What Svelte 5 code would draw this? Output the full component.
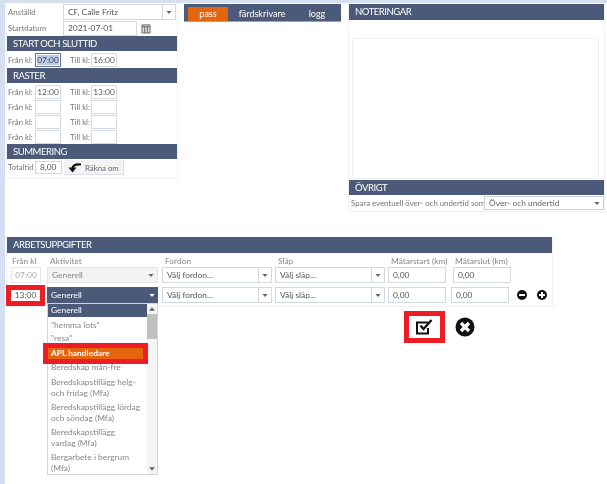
<script>
  // tidrader i raster-blocket
  const breaks = [
    { from: '12:00', to: '13:00' },
    { from: '', to: '' },
    { from: '', to: '' },
    { from: '', to: '' }
  ]

  const activities = [
    { name: 'Generell', cls: 'selected' },
    { name: '"hemma lots"' },
    { name: '"resa"' },
    { name: 'APL handledare', cls: 'marked' },
    { name: 'Beredskap mån-fre' },
    { name: 'Beredskapstillägg helg- och fridag (Mfa)' },
    { name: 'Beredskapstillägg lördag och söndag (Mfa)' },
    { name: 'Beredskapstillägg\nvardag (Mfa)' },
    { name: 'Bergarbete i bergrum (Mfa)' }
  ]
</script>

{#snippet arrow()}
  <svg class="arrow" viewBox="0 0 7 4" width="6" height="3"><path d="M0 0h7L3.5 4z" /></svg>
{/snippet}

{#snippet combo(text, cls = '')}
  <div class="combo {cls}">
    <span class="combo-text">{text}</span>
    <span class="combo-btn">{@render arrow()}</span>
  </div>
{/snippet}

<div class="page">
  <div class="top">
    <section class="left panel">
      <div class="field-row first">
        <span class="lbl wide">Anställd</span>
        {@render combo('CF, Calle Fritz', 'employee')}
      </div>
      <div class="field-row date">
        <span class="lbl wide">Startdatum</span>
        <div class="input date-input">2021-07-01</div>
        <svg class="cal" viewBox="0 0 11 11" width="10" height="11">
          <path d="M1 1.5h9v9H1z" fill="#d8d8d8" stroke="#666" stroke-width="1" />
          <path d="M1 3.5h9M4 3.5v7M7 3.5v7" stroke="#666" stroke-width="1" fill="none" />
        </svg>
      </div>

      <h2>START OCH SLUTTID</h2>
      <div class="time-row one">
        <span class="lbl">Från kl:</span>
        <div class="input time active"><span class="sel">07:00</span></div>
        <span class="lbl till">Till kl:</span>
        <div class="input time">16:00</div>
      </div>

      <h2>RASTER</h2>
      <div class="breaks">
        {#each breaks as b}
          <div class="time-row">
            <span class="lbl">Från kl:</span>
            <div class="input time">{b.from}</div>
            <span class="lbl till">Till kl:</span>
            <div class="input time">{b.to}</div>
          </div>
        {/each}
      </div>

      <h2>SUMMERING</h2>
      <div class="sum-row">
        <span class="lbl">Totaltid</span>
        <div class="input total">8,00</div>
        <button class="recalc">
          <svg viewBox="0 0 14 10" width="14" height="10">
            <path d="M13 1.5C8 1 5 2 4.5 5.5" fill="none" stroke="#111" stroke-width="2.2" />
            <path d="M0.5 4.5h8L4.5 9.5z" fill="#111" />
          </svg>
          <span>Räkna om</span>
        </button>
      </div>
    </section>

    <nav class="tabs">
      <span class="tab on">pass</span>
      <span class="tab">färdskrivare</span>
      <span class="tab">logg</span>
    </nav>

    <section class="right panel">
      <h2 class="notes-head">NOTERINGAR</h2>
      <div class="notes"></div>
      <h2>ÖVRIGT</h2>
      <div class="other-row">
        <span class="lbl">Spara eventuell över- och undertid som</span>
        <div class="other-select">
          <span>Över- och undertid</span>
          {@render arrow()}
        </div>
      </div>
    </section>
  </div>

  <section class="tasks panel">
    <h2 class="tasks-head">ARBETSUPPGIFTER</h2>
    <div class="grid">
      <span class="cap center">Från kl</span>
      <span class="cap">Aktivitet</span>
      <span class="cap">Fordon</span>
      <span class="cap">Släp</span>
      <span class="cap">Mätarstart (km)</span>
      <span class="cap">Mätarslut (km)</span>
      <span></span>

      <div class="input from muted">07:00</div>
      <div class="activity-plain"><span>Generell</span>{@render arrow()}</div>
      {@render combo('Välj fordon...')}
      {@render combo('Välj släp...')}
      <div class="input km">0,00</div>
      <div class="input km nudge">0,00</div>
      <span></span>

      <div class="from-hl"><div class="from-val">13:00</div></div>
      <div class="activity-open">
        <div class="activity-cur"><span>Generell</span>{@render arrow()}</div>
        <div class="dropdown">
          <ul>
            {#each activities as a}
              <li class={a.cls}>{a.name}</li>
            {/each}
          </ul>
          <div class="scrollbar">
            <svg viewBox="0 0 7 4" width="6" height="4"><path d="M0 4h7L3.5 0z" /></svg>
            <div class="thumb"></div>
            <svg class="down" viewBox="0 0 7 4" width="6" height="4"><path d="M0 0h7L3.5 4z" /></svg>
          </div>
        </div>
      </div>
      {@render combo('Välj fordon...')}
      {@render combo('Välj släp...')}
      <div class="input km">0,00</div>
      <div class="input km shift">0,00</div>
      <div class="row-btns">
        <svg viewBox="0 0 10 10" width="10" height="10"><circle cx="5" cy="5" r="5" fill="#111" /><path d="M2 5h6" stroke="#fff" stroke-width="2" /></svg>
        <svg viewBox="0 0 10 10" width="10" height="10"><circle cx="5" cy="5" r="5" fill="#111" /><path d="M2 5h6M5 2v6" stroke="#fff" stroke-width="2" /></svg>
      </div>
    </div>
    <div class="actions">
      <div class="save-hl">
        <svg viewBox="0 0 20 16" width="20" height="16">
          <path d="M13 3.5H2v11h11V9" fill="none" stroke="#111" stroke-width="2" />
          <path d="M5.5 6.5l3 3.5 8-9" fill="none" stroke="#111" stroke-width="2.4" />
        </svg>
      </div>
      <svg class="cancel" viewBox="0 0 20 20" width="20" height="20">
        <circle cx="10" cy="10" r="9.5" fill="#111" />
        <path d="M6 6l8 8M14 6l-8 8" stroke="#fff" stroke-width="3.4" />
      </svg>
    </div>
  </section>
</div>

<style>
  :global(body) {
    font-family: Lato, 'Liberation Sans', sans-serif;
    background: #fff;
    color: #444;
  }

  * {
    box-sizing: border-box;
  }

  .page {
    width: 607px;
    height: 484px;
    overflow: hidden;
    background: linear-gradient(#d5dfef, #d5dfef) left top / 5px 100% no-repeat,
      linear-gradient(#d5dfef, #d5dfef) left top / 100% 3px no-repeat, #fff;
    padding: 4px 0 0 6px;
    filter: blur(0.35px);
  }

  .top {
    display: flex;
    align-items: flex-start;
  }

  .panel {
    border: 1px solid #f0f0f0;
  }

  h2 {
    margin: 0;
    height: 15px;
    background: #4a5a78;
    color: #fff;
    font-size: 9.5px;
    font-weight: 400;
    letter-spacing: -0.45px;
    line-height: 15px;
    padding-left: 6px;
    white-space: nowrap;
  }

  .lbl {
    font-size: 7.8px;
    color: #777;
    white-space: nowrap;
  }

  .input {
    border: 1px solid #d3d9e2;
    background: #fff;
    font-size: 8.4px;
    color: #555;
    white-space: nowrap;
  }

  /* vänster panel */
  .left {
    width: 172px;
    height: 175px;
    border-top: 0;
    flex: none;
  }

  .field-row {
    display: flex;
    align-items: center;
    height: 16px;
  }

  .lbl.wide {
    width: 56px;
    padding-left: 1px;
  }

  .combo {
    display: flex;
    height: 16px;
    border: 1px solid #d3d9e2;
    background: #fff;
    font-size: 8.4px;
    color: #555;
    align-items: stretch;
  }

  .combo-text {
    flex: 1;
    padding-left: 4px;
    line-height: 14px;
    white-space: nowrap;
  }

  .combo-btn {
    width: 13px;
    border-left: 1px solid #d3d9e2;
    display: flex;
    align-items: center;
    justify-content: center;
  }

  .arrow {
    fill: #666;
  }

  .employee {
    width: 113px;
    height: 16px;
  }

  .date-input {
    width: 74px;
    height: 15px;
    line-height: 13px;
    padding-left: 4px;
  }

  .cal {
    margin-left: 4px;
  }

  .time-row {
    display: flex;
    align-items: center;
    height: 15px;
    padding-left: 1px;
  }

  .time-row.one {
    height: 17px;
    padding-top: 1px;
  }

  .time-row .lbl {
    width: 27px;
    flex: none;
  }

  .time-row .lbl.till {
    width: 30px;
    padding-left: 9px;
  }

  .time {
    width: 26px;
    height: 14px;
    text-align: center;
    line-height: 12px;
  }

  .time.active {
    border-color: #66708a;
  }

  .sel {
    background: #b9cbe6;
    color: #445;
  }

  .breaks {
    padding-top: 1px;
  }

  .sum-row {
    display: flex;
    align-items: center;
    height: 16px;
    padding-left: 1px;
  }

  .sum-row .lbl {
    width: 27px;
  }

  .total {
    width: 27px;
    height: 13px;
    line-height: 11px;
    padding-left: 4px;
  }

  .recalc {
    margin-left: 2px;
    width: 60px;
    height: 15px;
    border: 0;
    border-right: 1px solid #dcdfe5;
    border-bottom: 1px solid #dcdfe5;
    background: #f2f3f5;
    display: flex;
    align-items: center;
    gap: 3px;
    padding: 2px 0 0 4px;
    font: 7.8px Lato, 'Liberation Sans', sans-serif;
    color: #666;
    white-space: nowrap;
  }

  /* flikar */
  .tabs {
    margin: 0 0 0 6px;
    width: 157px;
    height: 18px;
    flex: none;
    background: #4a5a78;
    border-bottom: 1px solid #9aa6ba;
    display: flex;
    align-items: flex-end;
    padding-left: 4px;
    color: #fff;
    font-size: 9px;
  }

  .tab {
    height: 14px;
    line-height: 14px;
    text-align: center;
    white-space: nowrap;
  }

  .tab:nth-child(1) {
    width: 40px;
  }

  .tab:nth-child(2) {
    width: 66px;
    margin-left: 1px;
  }

  .tab:nth-child(3) {
    width: 40px;
    margin-left: 2px;
  }

  .tab.on {
    background: #e5650f;
  }

  /* höger panel */
  .right {
    width: 257px;
    height: 208px;
    margin-left: 7px;
    border-top: 0;
    flex: none;
  }

  .notes-head {
    height: 16px;
    line-height: 16px;
  }

  .notes {
    margin: 18px 5px 1px 3px;
    height: 141px;
    border: 1px solid #eceef2;
  }

  .other-row {
    display: flex;
    align-items: center;
    height: 14px;
    padding-left: 2px;
    margin-top: 1px;
  }

  .other-row .lbl {
    width: 133px;
  }

  .other-select {
    width: 120px;
    height: 14px;
    border: 1px solid #ccd2dc;
    background: #fff;
    font-size: 8.4px;
    display: flex;
    align-items: center;
    justify-content: space-between;
    padding: 0 3px 0 4px;
    color: #666;
  }

  /* arbetsuppgifter */
  .tasks {
    position: relative;
    width: 547px;
    margin-top: 25px;
    height: 70px;
    border-top: 0;
  }

  .tasks-head {
    height: 16px;
    line-height: 16px;
    padding-left: 6px;
  }

  .grid {
    display: grid;
    grid-template-columns: 36px 115px 113px 113px 64px 62px 1fr;
    grid-template-rows: 10px 16px 16px;
    row-gap: 4px;
    padding: 0 0 0 4px;
    font-size: 8.4px;
  }

  .cap {
    font-size: 8.4px;
    color: #888;
    line-height: 17px;
    padding-left: 3px;
    white-space: nowrap;
  }

  .cap.center {
    padding-left: 1px;
  }

  .grid .combo {
    width: 110px;
    height: 16px;
  }

  .grid .input.km {
    width: 58px;
    height: 16px;
    line-height: 14px;
    padding-left: 4px;
  }

  .grid .input.km.nudge {
    margin-left: 1px;
  }

  .grid .input.km.shift {
    margin-left: -1px;
  }

  .input.from {
    width: 30px;
    height: 16px;
    line-height: 14px;
    text-align: center;
  }

  .muted {
    color: #aaa;
    border-color: #e6e8ec;
  }

  .activity-plain {
    width: 111px;
    height: 16px;
    border: 1px solid #e0e3e8;
    background: #f3f3f3;
    display: flex;
    align-items: center;
    justify-content: space-between;
    padding: 0 3px 0 4px;
    color: #888;
  }

  .from-hl {
    width: 39px;
    height: 21px;
    margin: -2px 0 0 -5px;
    border: 5px solid #ee1c25;
    background: #fff;
    font-size: 8.4px;
    color: #555;
    line-height: 11px;
    text-align: center;
  }

  .activity-open {
    position: relative;
    width: 111px;
  }

  .activity-cur {
    height: 16px;
    background: #4a5a78;
    color: #fff;
    display: flex;
    align-items: center;
    justify-content: space-between;
    padding: 0 3px 0 4px;
  }

  .activity-cur .arrow {
    fill: #fff;
  }

  .dropdown {
    position: absolute;
    z-index: 2;
    top: 16px;
    left: 0;
    width: 111px;
    height: 172px;
    background: #fff;
    border: 1px solid #cfd5df;
    display: flex;
  }

  ul {
    list-style: none;
    margin: 0;
    padding: 0;
    width: 99px;
    font-size: 8.4px;
    line-height: 11px;
    color: #888;
    white-space: pre-line;
  }

  li {
    padding: 0 3px;
    margin-top: 3px;
  }

  li:nth-child(1) {
    margin-top: 0;
    background: #4a5a78;
    color: #fff;
    height: 13px;
    line-height: 13px;
  }

  li:nth-child(2) {
    margin-top: 2px;
    height: 13px;
    line-height: 13px;
  }

  li:nth-child(3) {
    margin-top: 0;
    height: 13px;
    line-height: 13px;
  }

  li:nth-child(4) {
    margin: 3px 4px 0 0;
    height: 11px;
    background: #e5650f;
    color: #fff;
    font-weight: 700;
    box-shadow: 0 0 0 5px #ee1c25;
    position: relative;
  }

  li:nth-child(5) {
    margin-top: 2px;
    height: 13px;
    line-height: 13px;
  }

  .scrollbar {
    flex: 1;
    background: #f4f4f4;
    display: flex;
    flex-direction: column;
    align-items: center;
    padding-top: 3px;
    fill: #666;
  }

  .thumb {
    width: 100%;
    height: 25px;
    margin-top: 3px;
    background: #c0c0c0;
  }

  .down {
    margin-top: auto;
    margin-bottom: 3px;
  }

  .row-btns {
    display: flex;
    gap: 10px;
    align-items: center;
    padding-left: 3px;
  }

  .actions {
    position: absolute;
    left: 397px;
    top: 74px;
    display: flex;
    align-items: center;
    gap: 10px;
  }

  .save-hl {
    width: 41px;
    height: 32px;
    border: 5px solid #ee1c25;
    background: #fff;
    display: flex;
    align-items: center;
    justify-content: center;
  }
</style>
